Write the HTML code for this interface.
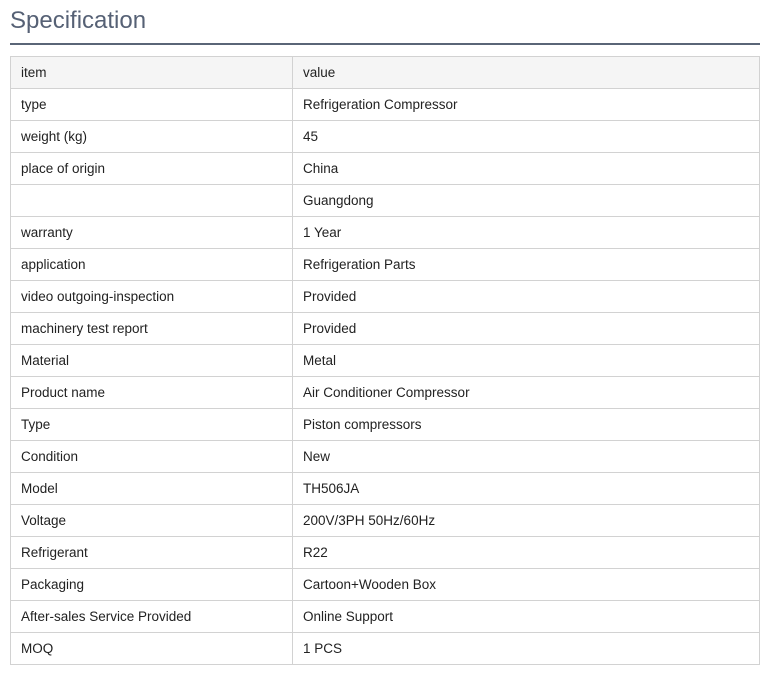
<!DOCTYPE html>
<html><head><meta charset="utf-8"><style>
body{margin:0;background:#fff;font-family:"Liberation Sans",Arial,sans-serif;}
h2{position:absolute;left:10px;top:6px;margin:0;font-weight:normal;font-size:24px;color:#566175;line-height:30px;}
.rule{position:absolute;left:10px;top:43px;width:750px;height:2px;background:#5a6577;}
table{position:absolute;left:10px;top:56px;width:750px;border-collapse:collapse;}
td{border:1px solid #d2d2d2;height:32px;padding:0 0 0 10px;font-size:13.5px;color:#222;box-sizing:border-box;}
td:first-child{width:282px;}
tr:first-child td{background:#f5f5f5;}
</style></head><body>
<h2>Specification</h2><div class="rule"></div>
<table>
<tr><td>item</td><td>value</td></tr>
<tr><td>type</td><td>Refrigeration Compressor</td></tr>
<tr><td>weight (kg)</td><td>45</td></tr>
<tr><td>place of origin</td><td>China</td></tr>
<tr><td></td><td>Guangdong</td></tr>
<tr><td>warranty</td><td>1 Year</td></tr>
<tr><td>application</td><td>Refrigeration Parts</td></tr>
<tr><td>video outgoing-inspection</td><td>Provided</td></tr>
<tr><td>machinery test report</td><td>Provided</td></tr>
<tr><td>Material</td><td>Metal</td></tr>
<tr><td>Product name</td><td>Air Conditioner Compressor</td></tr>
<tr><td>Type</td><td>Piston compressors</td></tr>
<tr><td>Condition</td><td>New</td></tr>
<tr><td>Model</td><td>TH506JA</td></tr>
<tr><td>Voltage</td><td>200V/3PH 50Hz/60Hz</td></tr>
<tr><td>Refrigerant</td><td>R22</td></tr>
<tr><td>Packaging</td><td>Cartoon+Wooden Box</td></tr>
<tr><td>After-sales Service Provided</td><td>Online Support</td></tr>
<tr><td>MOQ</td><td>1 PCS</td></tr>
</table>
</body></html>
